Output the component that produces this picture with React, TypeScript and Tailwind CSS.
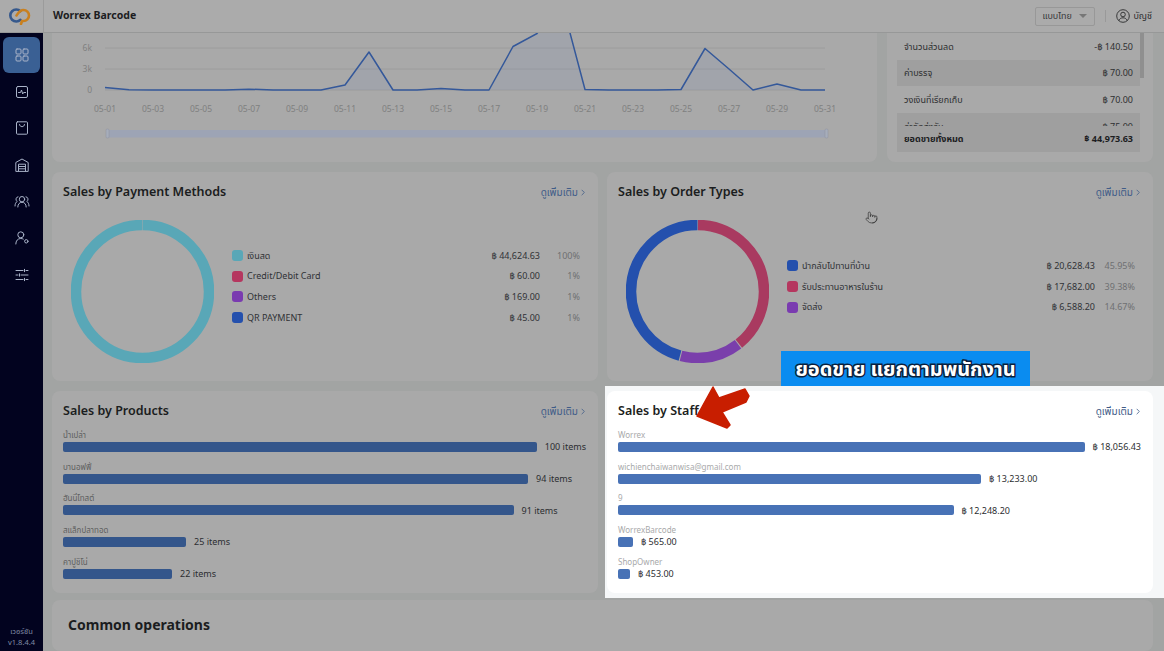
import React from "react";
import { Pointer } from "lucide-react";

const font = { };
const pts: [number, number][] = [
  [105, 87.5],[129, 89.8],[153, 90],[177, 90],[201, 90],[225, 90],[249, 89.2],[273, 90],[297, 90],[321, 90],[345, 85],[369, 52],[393, 90],[417, 90],[441, 88.5],[465, 90],[489, 90],[513, 46.5],[537, 33.5],[561, -1],[585, 89.5],[609, 90],[633, 90],[657, 90],[681, 89.5],[705, 48.5],[729, 69],[753, 90],[777, 84],[801, 90],[825, 90],
];
const line = pts.map((p) => p.join(",")).join(" ");
const area = `105,90 ${line} 825,90`;
const xLabels = ["05-01","05-03","05-05","05-07","05-09","05-11","05-13","05-15","05-17","05-19","05-21","05-23","05-25","05-27","05-29","05-31"];

function IconStroke({ children }: { children: React.ReactNode }) {
  return (
    <svg viewBox="0 0 16 16" className="w-[16px] h-[16px]" fill="none" stroke="#a9b3c8" strokeWidth="1" strokeLinecap="round" strokeLinejoin="round">
      {children}
    </svg>
  );
}

const navIcons = [
  <IconStroke key="a"><rect x="2" y="2" width="5" height="5" rx="1" /><rect x="9" y="2" width="5" height="5" rx="1" /><rect x="2" y="9" width="5" height="5" rx="1" /><rect x="9" y="9" width="5" height="5" rx="1" /></IconStroke>,
  <IconStroke key="b"><rect x="2.5" y="2.5" width="11" height="11" rx="1.5" /><path d="M4.5 8.5h2l1-2.5 1.2 4 .9-1.5h2" /></IconStroke>,
  <IconStroke key="c"><path d="M3.5 1.8h9a1 1 0 0 1 1 1v10.4a1 1 0 0 1-1 1h-9a1 1 0 0 1-1-1V2.800a1 1 0 0 1 1-1z" /><path d="M5.500 4.500c0 3 5 3 5 0" /></IconStroke>,
  <IconStroke key="d"><path d="M1.800 14V5.500L8 2l6.200 3.500V14z" /><path d="M4.500 14V7.200h7V14M4.500 9.500h7M4.500 11.800h7" /></IconStroke>,
  <IconStroke key="e"><circle cx="8" cy="5.200" r="2.700" /><path d="M3.800 13c0-3 1.800-4.700 4.200-4.700s4.200 1.700 4.200 4.700" /><path d="M4 2.800a2.500 2.500 0 0 0-.8 4.600C1.700 8.300 1 10 1 12M12 2.800a2.500 2.500 0 0 1 .8 4.600c1.500.9 2.200 2.600 2.200 4.600" /></IconStroke>,
  <IconStroke key="f"><circle cx="6.800" cy="4.800" r="3" /><path d="M1.800 14c0-3.300 2-5.500 5-5.500 1 0 1.800.2 2.500.6" /><circle cx="12.300" cy="11.300" r="1.700" /></IconStroke>,
  <IconStroke key="g"><path d="M2 3.500h7M12 3.500h2M2 8h2M7 8h7M2 12.500h7M12 12.500h2M10.500 2.300v2.400M5.500 6.800v2.400M10.500 11.300v2.400" /></IconStroke>,
];

function More() {
  return (
    <span className="flex items-center gap-[3px] text-[10px] text-[#3f5c88] leading-none">
      ดูเพิ่มเติม
      <svg viewBox="0 0 6 10" className="w-[4px] h-[7px]" fill="none" stroke="currentColor" strokeWidth="1.200"><path d="M1 1l4 4-4 4" /></svg>
    </span>
  );
}

function Title({ text }: { text: string }) {
  return (
    <div className="h-[20px] flex items-center justify-between pr-px">
      <h2 className="text-[12.500px] font-semibold text-[#1b1d20] leading-none">{text}</h2>
      <More />
    </div>
  );
}

type Seg = { c: string; p: number };
function Donut({ segs, gapColor }: { segs: Seg[]; gapColor: string }) {
  const r = 66.500;
  const C = 2 * Math.PI * r;
  let off = 0;
  return (
    <svg viewBox="0 0 143 143" className="w-[143px] h-[143px] shrink-0 -rotate-90">
      {segs.map((s, i) => {
        const el = (
          <circle key={i} cx="71.500" cy="71.500" r={r} fill="none" stroke={s.c} strokeWidth="10.500"
            strokeDasharray={`${(s.p / 100) * C - 1} ${C}`} strokeDashoffset={-off - 0.5} />
        );
        off += (s.p / 100) * C;
        return el;
      })}
    </svg>
  );
}

type Leg = { c: string; n: string; v: string; p: string };
function Legend({ rows }: { rows: Leg[] }) {
  return (
    <div className="w-[348px] ml-[18px] mb-[9px]">
      {rows.map((r) => (
        <div key={r.n} className="h-[20.600px] flex items-center text-[9px] text-[#303236]">
          <span className="w-[11px] h-[11px] rounded-[3px] mr-[4px]" style={{ background: r.c }} />
          <span className="flex-1">{r.n}</span>
          <span>{r.v}</span>
          <span className="w-[40px] text-right text-[#6f7072]">{r.p}</span>
        </div>
      ))}
    </div>
  );
}

function Bars({ rows, color, labelColor }: { rows: { n: string; w: number; v: string }[]; color: string; labelColor: string }) {
  return (
    <div className="mt-[8px]">
      {rows.map((r) => (
        <div key={r.n} className="h-[31.670px]">
          <div className="h-[12px] text-[8px] leading-[12px]" style={{ color: labelColor }}>{r.n}</div>
          <div className="mt-px flex items-center h-[10px]">
            <div className="h-[10px] rounded-[2px]" style={{ width: r.w, background: color }} />
            <span className="ml-[8px] text-[9px] text-[#2c2e31] whitespace-nowrap">{r.v}</span>
          </div>
        </div>
      ))}
    </div>
  );
}

const card = "rounded-lg bg-[#a9a9a9]";
const dimText = "#5e5f60";

export default function App() {
  return (
    <div className="relative flex flex-col h-screen w-full overflow-hidden bg-[#a2a4a3] text-[#2b2c2e]" style={{ fontFamily: '"Noto Sans","Noto Sans Thai","Liberation Sans","DejaVu Sans",sans-serif' }}>
      <header className="h-[33px] shrink-0 flex items-center bg-[#ababab] border-b border-[#979898]">
        <div className="w-[44px] h-full flex items-center justify-center border-r border-[#9b9b9b] shrink-0">
          <svg viewBox="0 0 28 18" className="w-[28px] h-[18px]" fill="none" strokeWidth="2.600" strokeLinecap="round">
            <path d="M12.500 4.200A6 6 0 1 0 12.500 12.800" stroke="#35588c" />
            <path d="M8.500 8.500c1.500-2 3-5.500 7-5.500a5.500 5.500 0 0 1 0 11h-1.500L13 17" stroke="#c9801f" />
          </svg>
        </div>
        <span className="ml-[9px] text-[10.500px] font-bold text-[#1c1d1f]">Worrex Barcode</span>
        <div className="ml-auto flex items-center pr-[12px]">
          <div className="w-[60px] h-[19px] rounded-[2px] border border-[#989898] flex items-center justify-between pl-[6px] pr-[7px] text-[9px] text-[#38393b]">
            แบบไทย
            <span className="w-0 h-0 border-x-[4px] border-x-transparent border-t-[4px] border-t-[#777]" />
          </div>
          <div className="w-px h-[12px] bg-[#999] mx-[10px]" />
          <svg viewBox="0 0 14 14" className="w-[14px] h-[14px]" fill="none" stroke="#2b2c2e" strokeWidth="0.900">
            <circle cx="7" cy="7" r="6.300" /><circle cx="7" cy="5.500" r="2.300" /><path d="M2.800 11.700c.8-2 2.200-2.900 4.200-2.900s3.400.9 4.200 2.900" />
          </svg>
          <span className="ml-[3px] text-[9px] text-[#2b2c2e]">บัญชี</span>
        </div>
      </header>
      <div className="flex flex-1 min-h-0">
        <aside className="w-[43px] shrink-0 bg-[#02031f] flex flex-col items-center pt-[4px]">
          {navIcons.map((ic, i) => (
            <div key={i} className={`w-[37px] h-[36px] flex items-center justify-center rounded-md mb-[0.700px] ${i === 0 ? "bg-[#3a6094]" : ""}`}>
              {ic}
            </div>
          ))}
          <div className="mt-auto mb-[3px] text-center text-[7.500px] leading-[11px] text-[#7f8aa3]">
            <div>เวอร์ชัน</div>
            <div>v1.8.4.4</div>
          </div>
        </aside>
        <main className="flex-1 min-w-0 flex flex-col overflow-hidden pl-[9px] pr-[11px]">
          <div className="grid grid-cols-[825px_266px] gap-[10px] h-[129px] shrink-0">
            <div className="rounded-b-lg bg-[#a9a9a9] overflow-hidden">
              <svg viewBox="52 33 825 129" className="w-[825px] h-[129px] block">
                {[48, 69, 90].map((y) => (<line key={y} x1="105" x2="825" y1={y} y2={y} stroke="#9a9b9b" strokeWidth="0.800" />))}
                {[["6k", 51], ["3k", 72], ["0", 93]].map(([t, y]) => (
                  <text key={t as string} x="92" y={y as number} textAnchor="end" fontSize="8.500" fill="#7f8080">{t}</text>
                ))}
                {xLabels.map((t, i) => (
                  <text key={t} x={105 + i * 48} y="112" textAnchor="middle" fontSize="8.500" fill="#7f8080">{t}</text>
                ))}
                <polygon points={area} fill="#7f8fb8" opacity="0.180" />
                <polyline points={line} fill="none" stroke="#34589a" strokeWidth="1.500" strokeLinejoin="round" />
                <rect x="107" y="130" width="720" height="7.500" fill="#9da4b5" />
                <rect x="106" y="129" width="3" height="9" rx="1" fill="#a6adbb" stroke="#8c919d" strokeWidth="0.500" />
                <rect x="825" y="129" width="3" height="9" rx="1" fill="#a6adbb" stroke="#8c919d" strokeWidth="0.500" />
              </svg>
            </div>
            <div className="rounded-b-lg bg-[#a9a9a9] pl-[10px] pr-[9px] pb-[10px] flex flex-col">
              <div className="flex h-[93px] shrink-0">
                <div className="flex-1 overflow-hidden text-[9px] text-[#2e2f31]">
                  {[["จำนวนส่วนลด", "-฿ 140.50"], ["ค่าบรรจุ", "฿ 70.00"], ["วงเงินที่เรียกเก็บ", "฿ 70.00"], ["ค่าจัดส่งรับ", "฿ 75.00"]].map(([a, b], i) => (
                    <div key={a} className={`h-[26.700px] shrink-0 flex items-center justify-between px-[7px] ${i % 2 === 1 ? "bg-[#9f9f9f]" : ""}`}>
                      <span>{a}</span><span>{b}</span>
                    </div>
                  ))}
                </div>
                <div className="w-[4px] shrink-0"><div className="h-[45px] bg-[#8f8f8f]" /></div>
              </div>
              <div className="h-[26px] mr-[4px] bg-[#9f9f9f] flex items-center justify-between px-[7px] text-[9px] font-bold text-[#1c1d1f]">
                <span>ยอดขายทั้งหมด</span><span>฿ 44,973.63</span>
              </div>
            </div>
          </div>

          <div className="grid grid-cols-2 gap-x-[9px] mt-[10px] shrink-0">
            <section className={`${card} h-[209px] pl-[11px] pr-[12px] pt-[10px]`}>
              <Title text="Sales by Payment Methods" />
              <div className="flex items-center mt-[17.500px] pl-[8px]">
                <Donut gapColor="#a9a9a9" segs={[{ c: "#59a7b7", p: 100 }]} />
                <Legend rows={[
                  { c: "#59a7b7", n: "เงินสด", v: "฿ 44,624.63", p: "100%" },
                  { c: "#b5375f", n: "Credit/Debit Card", v: "฿ 60.00", p: "1%" },
                  { c: "#7a3bb0", n: "Others", v: "฿ 169.00", p: "1%" },
                  { c: "#2450ad", n: "QR PAYMENT", v: "฿ 45.00", p: "1%" },
                ]} />
              </div>
            </section>
            <section className={`${card} h-[209px] pl-[11px] pr-[12px] pt-[10px]`}>
              <Title text="Sales by Order Types" />
              <div className="flex items-center mt-[17.500px] pl-[8px]">
                <Donut gapColor="#a9a9a9" segs={[{ c: "#a93a60", p: 39.38 }, { c: "#7a3fab", p: 14.67 }, { c: "#2450ad", p: 45.95 }]} />
                <Legend rows={[
                  { c: "#2450ad", n: "นำกลับไปทานที่บ้าน", v: "฿ 20,628.43", p: "45.95%" },
                  { c: "#b5375f", n: "รับประทานอาหารในร้าน", v: "฿ 17,682.00", p: "39.38%" },
                  { c: "#7a3bb0", n: "จัดส่ง", v: "฿ 6,588.20", p: "14.67%" },
                ]} />
              </div>
            </section>
          </div>

          <div className="grid grid-cols-2 gap-x-[9px] mt-[10px] h-[202px] shrink-0">
            <section className={`${card} pl-[11px] pr-[12px] pt-[10px]`}>
              <Title text="Sales by Products" />
              <Bars color="#34568b" labelColor={dimText} rows={[
                { n: "น้ำเปล่า", w: 482, v: "100 items" },
                { n: "บานอฟฟี่", w: 465, v: "94 items" },
                { n: "ฮันนี่โทสต์", w: 450.500, v: "91 items" },
                { n: "สแล็กปลาทอด", w: 123, v: "25 items" },
                { n: "คาปูชิโน่", w: 109, v: "22 items" },
              ]} />
            </section>
            <div className="relative z-10 -ml-[2px] -mr-[11px] -mt-[5px] -mb-[5px] pl-[2px] pr-[11px] py-[5px] bg-[#f5f7f8]">
              <section className="h-full rounded-lg bg-white pl-[11px] pr-[12px] pt-[10px]">
                <Title text="Sales by Staff" />
                <Bars color="#4872b6" labelColor="#a8a9aa" rows={[
                  { n: "Worrex", w: 476, v: "฿ 18,056.43" },
                  { n: "wichienchaiwanwisa@gmail.com", w: 363, v: "฿ 13,233.00" },
                  { n: "9", w: 335.500, v: "฿ 12,248.20" },
                  { n: "WorrexBarcode", w: 15, v: "฿ 565.00" },
                  { n: "ShopOwner", w: 12, v: "฿ 453.00" },
                ]} />
              </section>
            </div>
          </div>

          <section className={`${card} mt-[7px] flex-1 pl-[16px] pt-[15px]`}>
            <h2 className="text-[14px] font-bold text-[#1b1d20] leading-[20px]">Common operations</h2>
          </section>
        </main>
      </div>

      <div className="absolute z-20 left-[781px] top-[351px] w-[249px] h-[35px] bg-[#0a8cf0] flex items-center justify-center text-[20px] font-bold text-white whitespace-nowrap [-webkit-text-stroke:3px_#0a1f3c] [paint-order:stroke_fill]">
        ยอดขาย แยกตามพนักงาน
      </div>
      <svg viewBox="690 380 65 55" className="absolute z-20 left-[690px] top-[380px] w-[65px] h-[55px]">
        <polygon points="697,416 713,387 719,398 745,389 749,396 746,402 722,412 730,425 727,428" fill="#c81e00" stroke="#c81e00" strokeWidth="1.500" strokeLinejoin="round" />
      </svg>
      <Pointer className="absolute z-20 left-[865px] top-[210px] w-[13px] h-[15px] text-[#333]" strokeWidth={1.300} />
    </div>
  );
}
